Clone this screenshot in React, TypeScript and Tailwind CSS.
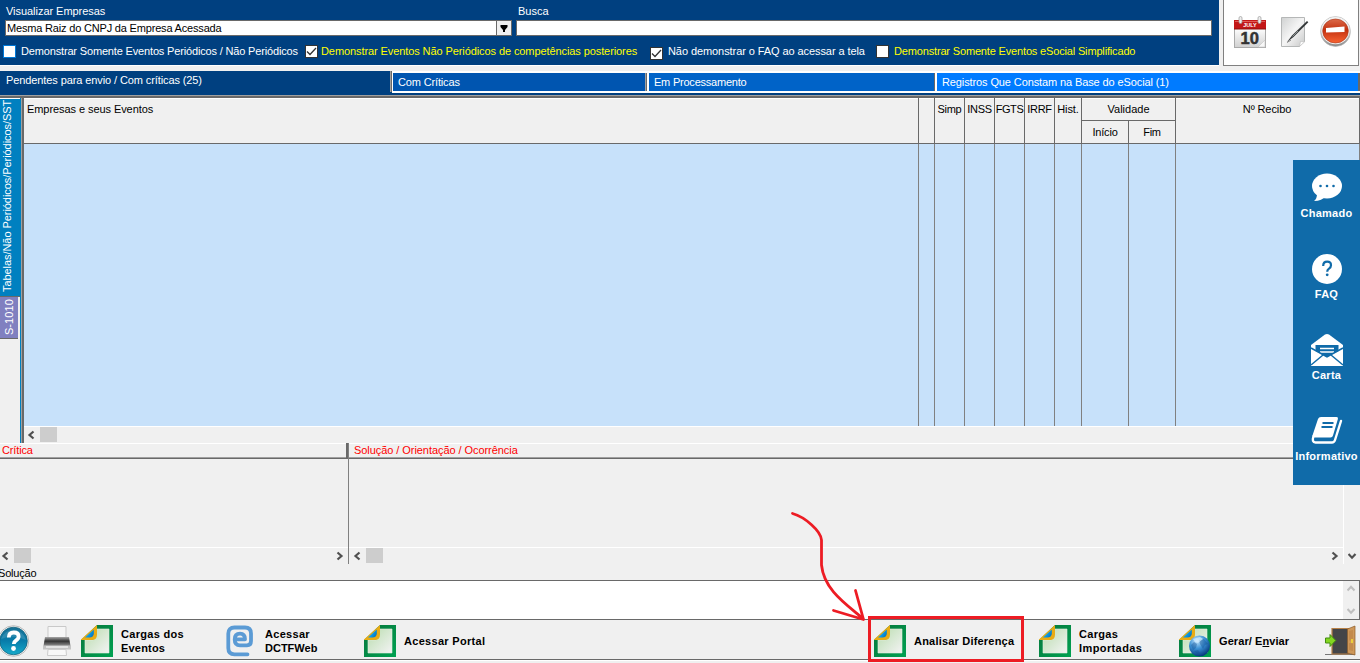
import type { ReactNode } from "react";

function Check({ checked = false, className = "" }: { checked?: boolean; className?: string }) {
  return (
    <span className={`block h-[13px] w-[13px] shrink-0 border bg-white ${className}`}>
      {checked && (
        <svg viewBox="0 0 11 11" className="block h-[11px] w-[11px]">
          <path d="M1 5.5 4 8.5 10 2" fill="none" stroke="#333" strokeWidth="1.3" />
        </svg>
      )}
    </span>
  );
}

function Chevron({ dir, className = "", color = "#505050" }: { dir: "left" | "right" | "up" | "down"; className?: string; color?: string }) {
  const paths = {
    left: "M7.500 1.500 3.500 5 7.500 8.500",
    right: "M2.5 1.5 6.5 5 2.5 8.5",
    up: "M.5 6.5 4 2.8 7.500 6.5",
    down: "M.5 3 4 6.7 7.500 3",
  };
  return (
    <svg viewBox="0 0 9 10" className={`block h-[10px] w-[9px] shrink-0 ${className}`}>
      <path d={paths[dir]} fill="none" stroke={color} strokeWidth="2.200" />
    </svg>
  );
}

function CalendarIcon() {
  return (
    <svg viewBox="0 0 32 32" className="h-8 w-8 shrink-0">
      <defs>
        <linearGradient id="calPage" x1="0" y1="0" x2="0" y2="1">
          <stop offset="0" stopColor="#fff" />
          <stop offset="1" stopColor="#d2d2d2" />
        </linearGradient>
      </defs>
      <rect x="0" y="4" width="32" height="28" fill="#aaa" />
      <rect x="1" y="12" width="30" height="19" fill="url(#calPage)" />
      <rect x="0" y="4" width="32" height="9" fill="#c31718" />
      <rect x="1" y="5" width="30" height="1" fill="#e25b55" />
      <path d="M0 13h32" stroke="#8b1011" />
      <path d="M31 24 24 31h7z" fill="#f8f8f8" stroke="#c4c4c4" strokeWidth=".6" />
      <rect x="5" y="0.5" width="3" height="7" rx="1.5" fill="#eee" stroke="#999" strokeWidth=".7" />
      <rect x="24" y="0.5" width="3" height="7" rx="1.5" fill="#eee" stroke="#999" strokeWidth=".7" />
      <text x="16" y="10.500" textAnchor="middle" fontSize="5.500" fontWeight="bold" fill="#fff" fontFamily="Liberation Sans, sans-serif">JULY</text>
      <text x="15.800" y="27.500" textAnchor="middle" fontSize="16.500" fontWeight="bold" fill="#333" stroke="#333" strokeWidth=".5" fontFamily="Liberation Sans, sans-serif">10</text>
    </svg>
  );
}

function NoteIcon() {
  return (
    <svg viewBox="0 0 28 32" className="h-8 w-7 shrink-0">
      <defs>
        <linearGradient id="note" x1="0" y1="0" x2="1" y2="1">
          <stop offset="0" stopColor="#cfd1d1" />
          <stop offset=".5" stopColor="#f5f5f5" />
          <stop offset="1" stopColor="#c7c8c8" />
        </linearGradient>
      </defs>
      <path d="M.5 1.5h23v24l-5 5H.5z" fill="url(#note)" stroke="#b5b7b7" />
      <path d="m18.500 30.500 1-5 4 .5z" fill="#fff" stroke="#bbb" strokeWidth=".6" />
      <path d="M6 26 11 19.500 26 5 27.300 6.300 12.500 21z" fill="#333738" />
      <path d="M11.500 20.500 17 15" stroke="#8c9293" strokeWidth="1" />
      <path d="M6 26.500 10 24" stroke="#666" strokeWidth=".8" />
    </svg>
  );
}

function StopIcon() {
  return (
    <svg viewBox="0 0 32 32" className="h-8 w-8 shrink-0">
      <defs>
        <linearGradient id="ring" x1="0" y1="0" x2="0" y2="1">
          <stop offset="0" stopColor="#f7f7f7" />
          <stop offset=".5" stopColor="#d0d0d0" />
          <stop offset="1" stopColor="#888" />
        </linearGradient>
        <linearGradient id="red" x1="0" y1="0" x2="0" y2="1">
          <stop offset="0" stopColor="#dc6b4b" />
          <stop offset=".45" stopColor="#c33210" />
          <stop offset="1" stopColor="#f86332" />
        </linearGradient>
      </defs>
      <ellipse cx="15.500" cy="15.500" rx="15" ry="15" fill="url(#ring)" stroke="#b4b4b4" strokeWidth=".6" />
      <ellipse cx="15.500" cy="14.800" rx="14" ry="13.500" fill="#f2f2f2" />
      <ellipse cx="15.500" cy="15" rx="12.800" ry="12" fill="url(#red)" stroke="#a92f11" strokeWidth=".6" />
      <path d="M6 12 24.500 10.500v5.500L6 16.500z" fill="#fff" />
    </svg>
  );
}

function SheetIcon({ id, globe = false }: { id: string; globe?: boolean }) {
  return (
    <svg viewBox="0 0 32 32" className="h-8 w-8 shrink-0">
      <defs>
        <linearGradient id={`${id}p`} x1="0" y1="0" x2="1" y2="1">
          <stop offset="0" stopColor="#b9ddae" />
          <stop offset="1" stopColor="#f3f3f4" />
        </linearGradient>
        <linearGradient id={`${id}g`} x1="0" y1="0" x2="1" y2="1">
          <stop offset="0" stopColor="#08743b" />
          <stop offset="1" stopColor="#00a252" />
        </linearGradient>
        <linearGradient id={`${id}f`} x1="0" y1="0" x2="1" y2=".6">
          <stop offset="0" stopColor="#2868a8" />
          <stop offset=".55" stopColor="#0aa0ee" />
          <stop offset="1" stopColor="#0878c0" />
        </linearGradient>
        <radialGradient id={`${id}b`} cx=".38" cy=".25" r=".75">
          <stop offset="0" stopColor="#c5e6fc" />
          <stop offset=".5" stopColor="#3c91d5" />
          <stop offset="1" stopColor="#073c80" />
        </radialGradient>
      </defs>
      <path d="M16 0h16v32H0V15z" fill={`url(#${id}g)`} />
      <path d="M16 4h12v24H4V15h8z" fill={`url(#${id}p)`} stroke="#e5eee0" strokeWidth=".6" />
      <path d="M0 14.500 16 0V9.500q0 5.500-5.500 5.500H0z" fill="#e8ac14" />
      <path d="M4 12.500 12.800 4.500V9q-.8 3.500-4.300 3.500z" fill={`url(#${id}f)`} />
      {globe && (
        <>
          <circle cx="20.500" cy="21" r="10.500" fill={`url(#${id}b)`} />
          <path d="m12 20 3-3 3 2-1 4-3 2zm8-5 5-1 4 5-3 1-2 4-3-5zm-5 11 4-1 2 3-2 2z" fill="#144f90" opacity=".4" />
          <path d="m14 14 7-2 3 2-5 4-3-1z" fill="#d1edff" opacity=".7" />
        </>
      )}
    </svg>
  );
}

function HelpIcon() {
  return (
    <svg viewBox="0 0 30 32" className="h-8 w-[30px] shrink-0">
      <defs>
        <linearGradient id="help" x1="0" y1="0" x2="0" y2="1">
          <stop offset="0" stopColor="#197195" />
          <stop offset=".48" stopColor="#087ba9" />
          <stop offset="1" stopColor="#16aaca" />
        </linearGradient>
      </defs>
      <circle cx="13.500" cy="16" r="15.300" fill="#f6f6f6" stroke="#b8b8b8" />
      <circle cx="13.500" cy="16" r="13.800" fill="url(#help)" stroke="#12637e" strokeWidth=".8" />
      <path d="M1 14q12-5 25 1A13 13 0 0 0 1 14" fill="#63adc7" opacity=".35" />
      <path d="M8.800 12.500q0-5 5-5 4.800 0 4.800 4 0 2.300-2.500 3.900-2.300 1.500-2.300 3.600" fill="none" stroke="#fff" strokeWidth="3.800" />
      <circle cx="13.500" cy="23.500" r="2.400" fill="#fff" />
    </svg>
  );
}

function PrinterIcon() {
  return (
    <svg viewBox="0 0 28 32" className="h-8 w-7 shrink-0">
      <defs>
        <linearGradient id="print" x1="0" y1="0" x2="0" y2="1">
          <stop offset="0" stopColor="#a8a8a8" />
          <stop offset=".35" stopColor="#333" />
          <stop offset="1" stopColor="#d0d0d0" />
        </linearGradient>
      </defs>
      <path d="M5 1.500h18V14H5z" fill="#f6f6f6" stroke="#c9c9c9" />
      <path d="M2 12h24l2 12H0z" fill="url(#print)" />
      <path d="M0 20.500h28v4H0z" fill="#c4c4c4" />
      <path d="M3 22h22" stroke="#eee" strokeWidth="1.500" />
      <path d="M5 24.500h18l.5 6H4.500z" fill="#f8f8f8" stroke="#ccc" />
    </svg>
  );
}

function PortalIcon() {
  return (
    <svg viewBox="0 0 28 32" className="h-8 w-7 shrink-0">
      <path d="M21.500 29.300H8.500Q2.300 29.300 2.300 23V8.500Q2.300 2.500 8.500 2.500H19Q25 2.500 25 8.500V16Q25 20.300 21 20.300H14Q8.700 20.300 8.700 14.500 8.700 8.700 14 8.700 19 8.700 19 14.300H10" fill="none" stroke="#5b9bd5" strokeWidth="3.800" strokeLinejoin="round" strokeLinecap="round" />
    </svg>
  );
}

function DoorIcon() {
  return (
    <svg viewBox="0 0 31 32" className="h-8 w-[31px] shrink-0">
      <path d="M0 29.500h30" stroke="#777" />
      <path d="M7 3.500H24V29H7z" fill="#444548" stroke="#b78046" strokeWidth="1.200" />
      <path d="M22.500 4 30 1v29l-7.500-2z" fill="#ce985a" stroke="#8d5c2a" strokeWidth=".7" />
      <path d="m24 6 4-1v10l-4 .5zm0 12 4 .5V26l-4-1z" fill="#b87b3e" opacity=".5" />
      <path d="M27 14v4" stroke="#f0d438" strokeWidth="1.800" />
      <path d="M.5 13H5V9.500L10.800 15.500 5 21.500V18H.5z" fill="#83d621" stroke="#438c11" />
    </svg>
  );
}

function SideItem({ label, children }: { label: string; children: ReactNode }) {
  return (
    <div className="flex h-[81px] flex-col items-center">
      <svg viewBox="0 0 34 34" className="mt-[10px] h-[34px] w-[34px]">{children}</svg>
      <span className="mt-[2px] text-[11px] font-bold leading-[14px] tracking-[0.25px] text-white">{label}</span>
    </div>
  );
}

const flagColumns = [
  { name: "", cell: "w-[16px]" },
  { name: "Simp", cell: "w-[30px] tracking-[-0.3px]" },
  { name: "INSS", cell: "w-[30px] tracking-[-0.3px]" },
  { name: "FGTS", cell: "w-[30px] tracking-[-0.4px]" },
  { name: "IRRF", cell: "w-[30px] tracking-[-0.3px]" },
  { name: "Hist.", cell: "w-[27px] tracking-[-0.1px]" },
];

function ScrollRow({ className = "", right = false }: { className?: string; right?: boolean }) {
  return (
    <div className={`flex h-[17px] items-start border-t border-white bg-[#f0f0f0] ${className}`}>
      <Chevron dir="left" className="mt-[3px]" />
      <span className="ml-[5px] h-[15px] w-[17px] bg-[#cdcdcd]" />
      <span className="grow" />
      {right && <Chevron dir="right" className="mt-[3px]" />}
    </div>
  );
}

export default function App() {
  return (
    <div className="relative flex h-[663px] w-[1360px] flex-col overflow-hidden whitespace-nowrap bg-[#f0f0f0] font-['Liberation_Sans',Arial,sans-serif] text-[11px] leading-[14px] text-black">
      <header className="flex h-[71px] shrink-0">
        <div className="h-[66px] w-[1219px] border-b border-white bg-[#004080] text-white">
          <div className="flex h-5 pt-[4px]">
            <span className="w-[512px] pl-[6px] tracking-[-0.04px]">Visualizar Empresas</span>
            <span className="pl-[6px]">Busca</span>
          </div>
          <div className="flex h-4 pl-[5px]">
            <div className="flex h-4 w-[507px] border border-[#696969] bg-white text-black">
              <span className="grow pl-px leading-[15px] tracking-[-0.18px]">Mesma Raiz do CNPJ da Empresa Acessada</span>
              <span className="flex w-[15px] items-center justify-center border-l border-[#696969] bg-[#f0f0f0]">
                <svg viewBox="0 0 8 7" className="h-[7px] w-2"><path d="M.5 0h7v2L5 5v2H3V5L.5 2z" /></svg>
              </span>
            </div>
            <div className="ml-1 h-4 w-[696px] border border-[#696969] bg-white" />
          </div>
          <div className="flex h-[29px] pl-[3px] pt-[8px]">
            <div className="flex w-[302px] shrink-0"><Check className="mt-px border-[#0078d7]" /><span className="ml-[5px] tracking-[-0.16px]">Demonstrar Somente Eventos Periódicos / Não Periódicos</span></div>
            <div className="flex w-[345px] shrink-0 text-[#ffff00]"><Check checked className="mt-px border-[#333]" /><span className="ml-[3px] tracking-[-0.09px]">Demonstrar Eventos Não Periódicos de competências posteriores</span></div>
            <div className="flex w-[226px] shrink-0"><Check checked className="mt-[3px] border-[#333]" /><span className="ml-[5px] tracking-[-0.08px]">Não demonstrar o FAQ ao acessar a tela</span></div>
            <div className="flex text-[#ffff00]"><Check className="mt-px border-[#333]" /><span className="ml-[5px] tracking-[-0.16px]">Demonstrar Somente Eventos eSocial Simplificado</span></div>
          </div>
        </div>
        <div className="ml-1 flex h-[66px] w-[136px] border-x border-b border-[#808080] bg-white pl-[10px] pt-4">
          <CalendarIcon /><span className="w-[15px]" /><NoteIcon /><span className="w-[11px]" /><StopIcon />
        </div>
      </header>

      <nav className="flex h-[27px] shrink-0 border-b-2 border-[#696969] bg-[#004080] text-white shadow-[inset_0_-1px_#a0a0a0]">
        <div className="h-[21px] w-[392px] border-r border-[#696969] pl-[6px] pt-[2px] tracking-[-0.1px] shadow-[inset_-1px_0_#a0a0a0]">Pendentes para envio / Com críticas (25)</div>
        <div className="h-[22px] w-[253px] border-y-2 border-l border-white bg-[#0055b0] pl-[5px] pt-[2px] tracking-[-0.15px]">Com Críticas</div>
        <div className="flex h-[22px] w-[289px] border-y-2 border-white"><span className="w-px bg-[#a0a0a0]" /><span className="w-px bg-[#696969]" /><span className="grow border-l-2 border-white bg-[#0063c8] pl-[5px] pt-[2px] tracking-[-0.22px]">Em Processamento</span></div>
        <div className="flex h-[22px] w-[426px] border-y-2 border-white"><span className="w-px bg-[#696969]" /><span className="grow border-l-2 border-white bg-[#007bff] pl-[5px] pt-[2px] tracking-[-0.11px]">Registros Que Constam na Base do eSocial (1)</span><span className="w-[2px] bg-[#696969]" /></div>
      </nav>

      <main className="flex h-[345px] shrink-0">
        <aside className="flex w-6 shrink-0 border-r-2 border-[#696969]">
          <div className="w-[21px] border-r border-[#0080c0]">
            <div className="flex h-[199px] w-5 items-center bg-[#0080c0] text-white shadow-[inset_0_1px_#fff,inset_0_-1px_#696969]">
              <span className="mb-[5px] h-[194px] w-[14px] rotate-180 tracking-[-0.06px] [writing-mode:vertical-rl]">Tabelas/Não Periódicos/Periódicos/SST</span>
            </div>
            <div className="mr-[2px] flex h-[42px] items-center justify-center border-b border-[#696969] bg-[#8080c0] text-white">
              <span className="mb-px rotate-180 tracking-[0.1px] [writing-mode:vertical-rl]">S-1010</span>
            </div>
          </div>
          <span className="w-px bg-[#a0a0a0]" />
        </aside>
        <section className="flex min-w-0 grow flex-col">
          <div className="flex h-[46px] border-b border-r border-[#696969] shadow-[inset_0_1px_#fff]">
            <div className="w-[895px] border-r border-[#696969] pl-[3px] pt-[4px] tracking-[-0.07px]">Empresas e seus Eventos</div>
            {flagColumns.map((column) => (
              <div key={column.name} className={`flex shrink-0 justify-center border-r border-[#696969] pt-[4px] ${column.cell}`}>{column.name}</div>
            ))}
            <div className="w-[94px] shrink-0 border-r border-[#696969] text-center">
              <div className="h-[23px] border-b border-[#696969] pt-[4px]">Validade</div>
              <div className="flex h-[22px]">
                <div className="w-[47px] border-r border-[#696969] pt-[4px] tracking-[-0.2px]">Início</div>
                <div className="grow pt-[4px] tracking-[-0.3px]">Fim</div>
              </div>
            </div>
            <div className="grow pr-px pt-[4px] text-center tracking-[-0.1px]">Nº Recibo</div>
          </div>
          <div className="flex h-[282px] border-r border-[#808080] bg-[#c7e1fa]">
            <div className="w-[895px] border-r border-[#808080]" />
            {flagColumns.map((column) => (
              <div key={column.name} className={`shrink-0 border-r border-[#808080] ${column.cell}`} />
            ))}
            <div className="w-[47px] border-r border-[#808080]" />
            <div className="w-[47px] border-r border-[#808080]" />
          </div>
          <ScrollRow className="pl-[2px]" />
        </section>
      </main>

      <section className="flex h-[121px] shrink-0">
        <div className="w-[349px] border-r border-[#808080]">
          <div className="flex h-4 border-b border-r-2 border-[#696969] pl-[2px] tracking-[-0.14px] text-[#ff0000] shadow-[inset_0_1px_#fff,inset_0_-1px_#a0a0a0]">Crítica</div>
          <div className="h-[88px]" />
          <ScrollRow className="pr-[4px]" right />
        </div>
        <div className="w-[995px] border-r border-white">
          <div className="h-4 border-b border-[#696969] pl-[5px] tracking-[-0.06px] text-[#ff0000] shadow-[inset_0_1px_#fff,inset_0_-1px_#a0a0a0]">Solução / Orientação / Ocorrência</div>
          <div className="h-[88px]" />
          <ScrollRow className="pl-[3px] pr-[4px]" right />
        </div>
        <div className="flex grow items-end justify-center pb-[3px]"><Chevron dir="down" /></div>
      </section>

      <section className="h-[56px] shrink-0">
        <div className="-ml-[2px] h-4 pt-[2px] tracking-[-0.2px]">Solução</div>
        <div className="flex h-10 justify-end border-y border-r border-[#696969] bg-white">
          <div className="flex w-4 flex-col items-center justify-between bg-[#f0f0f0] py-[3px]">
            <Chevron dir="up" color="#bfbfbf" /><Chevron dir="down" color="#bfbfbf" />
          </div>
        </div>
      </section>

      <footer className="flex h-10 shrink-0 items-center border-b border-[#696969] pt-[3px] font-bold tracking-[0.3px] shadow-[0_1px_#fff]">
        <div className="w-[43px]"><HelpIcon /></div>
        <div className="w-[38px]"><PrinterIcon /></div>
        <div className="flex w-[145px] items-center gap-2"><SheetIcon id="cargas" /><span>Cargas dos<br /><span className="tracking-[0.2px]">Eventos</span></span></div>
        <div className="flex w-[138px] items-center gap-[11px]"><PortalIcon /><span>Acessar<br /><span className="tracking-[0px]">DCTFWeb</span></span></div>
        <div className="flex w-[510px] items-center gap-2"><SheetIcon id="portal" /><span>Acessar Portal</span></div>
        <div className="flex w-[165px] items-center gap-2"><SheetIcon id="diff" /><span className="tracking-[0.2px]">Analisar Diferença</span></div>
        <div className="flex w-[140px] items-center gap-2"><SheetIcon id="imported" /><span>Cargas<br /><span className="tracking-[0.4px]">Importadas</span></span></div>
        <div className="flex w-[146px] items-center gap-2"><SheetIcon id="send" globe /><span className="tracking-[0.08px]">Gerar/ E<u>n</u>viar</span></div>
        <DoorIcon />
      </footer>

      <aside className="absolute right-0 top-[160px] h-[325px] w-[67px] bg-[#106ba9]">
        <SideItem label="Chamado">
          <ellipse cx="17" cy="16" rx="15" ry="12.500" fill="#fff" />
          <path d="M7 24q0 5-3 7 8 0 12-5z" fill="#fff" />
          <g fill="#106ba9"><circle cx="10.500" cy="16" r="1.300" /><circle cx="17" cy="16" r="1.300" /><circle cx="23.500" cy="16" r="1.300" /></g>
        </SideItem>
        <SideItem label="FAQ">
          <circle cx="17" cy="18" r="15" fill="#fff" />
          <path d="M13.200 15q0-4.300 4-4.300 3.800 0 3.800 3.500 0 2-2 3.400-1.800 1.200-1.800 3.100" fill="none" stroke="#106ba9" strokeWidth="2.200" />
          <circle cx="17.200" cy="23.800" r="1.400" fill="#106ba9" />
        </SideItem>
        <SideItem label="Carta">
          <path d="M1 13 15 2.500q2-1.200 4 0L33 13v21H1z" fill="#fff" />
          <path d="M5.500 13h23v6L17 25 5.500 19z" fill="#106ba9" />
          <path d="M10 16.500h14M10 20h14" stroke="#fff" strokeWidth="1.300" />
          <path d="m1 16 16 9 16-9M1 33l12-10M33 33 21 23" fill="none" stroke="#106ba9" strokeWidth="1.500" />
        </SideItem>
        <SideItem label="Informativo">
          <path d="M11 4h15.500q2 0 1.400 2L23 22.500q-.5 2-2.500 2H4.500Q2 24.500 2.800 21.500L8 6q.7-2 3-2z" fill="#fff" />
          <path d="M3.500 23q-2 6.500 2 6.500H22q2.200 0 3-2.500L31 8" fill="none" stroke="#fff" strokeWidth="2.400" strokeLinecap="round" />
          <path d="M12.500 10h11M11.500 14h11" stroke="#106ba9" strokeWidth="2" />
        </SideItem>
      </aside>

      <div className="absolute left-[868px] top-[616px] h-[46px] w-[156px] border-[3px] border-[#ed1c24]" />
      <svg viewBox="790 510 80 115" className="pointer-events-none absolute left-[790px] top-[510px] h-[115px] w-20">
        <path d="M792.500 513.500C805 517 821 531 821.500 540V565C824 590 846 604 863.500 619M855.500 590.500 863.500 619.500 833.500 610.500" fill="none" stroke="#ed1c24" strokeWidth="2.800" strokeLinecap="round" strokeLinejoin="round" />
      </svg>
    </div>
  );
}
